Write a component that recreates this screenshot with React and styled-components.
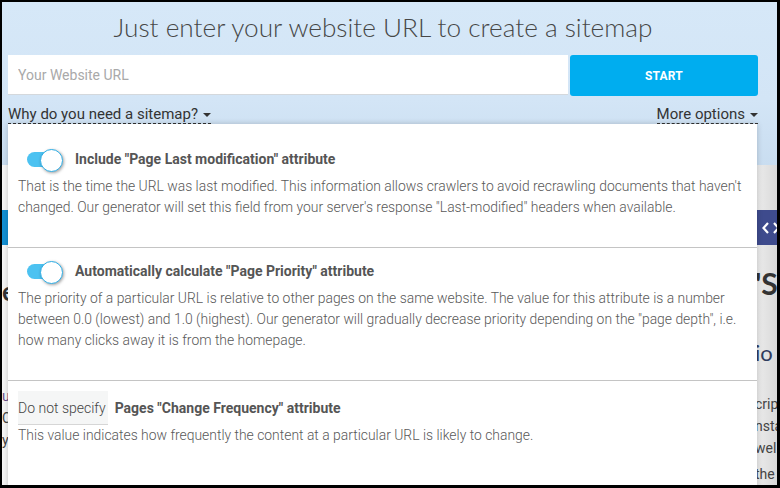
import React from 'react';
import styled, { createGlobalStyle } from 'styled-components';

const GlobalStyle = createGlobalStyle`
  html, body {
    margin: 0;
    padding: 0;
    background: #000;
  }
  * {
    box-sizing: border-box;
  }
`;

const options = [
  {
    kind: 'toggle',
    title: 'Include "Page Last modification" attribute',
    text: 'That is the time the URL was last modified. This information allows crawlers to avoid recrawling documents that haven\'t changed. Our generator will set this field from your server\'s response "Last-modified" headers when available.'
  },
  {
    kind: 'toggle',
    title: 'Automatically calculate "Page Priority" attribute',
    text: 'The priority of a particular URL is relative to other pages on the same website. The value for this attribute is a number between 0.0 (lowest) and 1.0 (highest). Our generator will gradually decrease priority depending on the "page depth", i.e. how many clicks away it is from the homepage.'
  },
  {
    kind: 'select',
    title: 'Pages "Change Frequency" attribute',
    text: 'This value indicates how frequently the content at a particular URL is likely to change.'
  }
];

// fragments of the page that peek out beside the options panel
const sideLines = ['crip', 'nsta', 'wel'];
const sideLines2 = ['the', 'hou'];

const Frame = styled.div`
  width: 780px;
  height: 488px;
  background: #000;
  padding: 2px 3px 3px 2px;
`;

const Window = styled.div`
  position: relative;
  width: 100%;
  height: 100%;
  overflow: hidden;
  display: flex;
  flex-direction: column;
  background: linear-gradient(to right, #f6f6f6 0%, #f6f6f6 96%, #d9d9d9 100%);
`;

const Hero = styled.header`
  flex-shrink: 0;
  height: 163px;
  padding: 0 19px 0 6px;
  display: flex;
  flex-direction: column;
  background: linear-gradient(to bottom, #d6e8f8 0%, #d3e5f6 60%, #c9ddf0 100%);
`;

const Title = styled.h1`
  margin: 10px 0 0;
  height: 30px;
  line-height: 30px;
  text-align: center;
  font-family: 'Lato Light', Lato, 'Open Sans', sans-serif;
  font-weight: 300;
  font-size: 26.2px;
  color: #474747;
`;

const Form = styled.div`
  margin-top: 13px;
  display: flex;
  align-items: flex-start;
  gap: 2px;
`;

const UrlInput = styled.input`
  flex: 1;
  height: 40px;
  border: none;
  border-bottom: 1px solid #d4d8dc;
  background: #fff;
  padding: 0 10px;
  font-family: Roboto, 'Liberation Sans', sans-serif;
  font-size: 14px;
  color: #333;
  outline: none;

  &::placeholder {
    color: #a9a9a9;
  }
`;

const StartButton = styled.button`
  width: 188px;
  height: 41px;
  border: none;
  border-radius: 3px;
  background: #00adef;
  color: #fff;
  font-family: Roboto, 'Liberation Sans', sans-serif;
  font-weight: 700;
  font-size: 12px;
  letter-spacing: 0.2px;
  cursor: pointer;
`;

const Links = styled.div`
  margin-top: 8px;
  display: flex;
  justify-content: space-between;
  align-items: center;
  height: 20px;
`;

const DropLink = styled.span`
  display: inline-flex;
  align-items: center;
  gap: 5px;
  font-family: Roboto, 'Liberation Sans', sans-serif;
  font-size: 15px;
  color: #333;
  line-height: 18px;
  border-bottom: 1px dashed #333;
  cursor: pointer;
`;

const Caret = styled.span`
  width: 0;
  height: 0;
  border-left: 4px solid transparent;
  border-right: 4px solid transparent;
  border-top: 4px solid #333;
  margin-top: 2px;
`;

const Body = styled.main`
  flex: 1;
  padding-top: 45px;
  display: flex;
  flex-direction: column;
`;

const Nav = styled.nav`
  height: 35px;
  display: flex;
`;

const NavMain = styled.div`
  flex: 1;
  background: #138fd3;
`;

const NavSide = styled.div`
  width: 300px;
  background: #3e4b8d;
  display: flex;
  align-items: center;
  justify-content: flex-end;
`;

const CodeIcon = styled.svg`
  width: 18px;
  height: 14px;
  margin-right: -3px;
`;

const Columns = styled.div`
  display: flex;
  justify-content: space-between;
`;

const LeftCol = styled.div`
  width: 8px;
  padding-top: 28px;
  overflow: hidden;
`;

const RightCol = styled.div`
  width: 22px;
  padding-top: 20px;
  white-space: nowrap;
  overflow: hidden;
`;

const PageHeading = styled.div`
  font-family: Lato, sans-serif;
  font-size: ${p => p.$size || 30}px;
  line-height: 36px;
  font-weight: 700;
  color: #333;
`;

const PageSub = styled.div`
  margin-top: 38px;
  font-family: Lato, sans-serif;
  font-size: 22px;
  line-height: 28px;
  color: #2f3c5e;
`;

const PageText = styled.div`
  margin-top: ${p => p.$gap || 0}px;
  font-family: Roboto, sans-serif;
  font-size: 14px;
  line-height: 22px;
  color: ${p => p.$color || '#444'};
`;

const Panel = styled.section`
  position: absolute;
  top: 122px;
  left: 6px;
  width: 749px;
  bottom: -20px;
  padding-top: 12px;
  background: #fff;
  box-shadow: 0 0 6px rgba(0, 0, 0, 0.2);
`;

const Option = styled.div`
  padding: ${p => p.$top}px 8px 29px 10px;
  border-bottom: 1px solid #c4c4c4;

  &:last-child {
    border-bottom: none;
  }
`;

const OptionHead = styled.div`
  display: flex;
  align-items: center;
  height: ${p => p.$height}px;
`;

const Toggle = styled.span`
  position: relative;
  width: 36px;
  height: 21px;
  margin: 0 12px 0 9px;
  flex-shrink: 0;

  &::before {
    content: '';
    position: absolute;
    left: 0;
    top: 3px;
    width: 32px;
    height: 15px;
    border-radius: 8px;
    background: #4cc2f1;
  }

  &::after {
    content: '';
    position: absolute;
    right: 0;
    top: 0;
    width: 21px;
    height: 21px;
    border-radius: 50%;
    background: #fff;
    border: 1.5px solid #2eaee6;
    box-shadow: 1px 1px 3px rgba(0, 0, 0, 0.35);
  }
`;

const Select = styled.span`
  display: flex;
  align-items: center;
  height: 34px;
  padding: 0 2px 0 0;
  margin-right: 7px;
  background: #f5f6f6;
  border-bottom: 1px solid #d6d6d6;
  font-family: Roboto, 'Liberation Sans', sans-serif;
  font-size: 14px;
  font-weight: 300;
  color: #444;
`;

const OptionTitle = styled.span`
  font-family: Roboto, 'Liberation Sans', sans-serif;
  font-weight: 700;
  font-size: 14px;
  color: #555;
`;

const OptionText = styled.p`
  margin: ${p => p.$gap}px 0 0;
  font-family: Roboto, 'Liberation Sans', sans-serif;
  font-weight: 300;
  font-size: 13.9px;
  line-height: 21px;
  color: #595959;
`;

export default function App() {
  return (
    <>
      <GlobalStyle />
      <Frame>
        <Window>
          <Hero>
            <Title>Just enter your website URL to create a sitemap</Title>
            <Form>
              <UrlInput placeholder="Your Website URL" />
              <StartButton type="button">START</StartButton>
            </Form>
            <Links>
              <DropLink>Why do you need a sitemap? <Caret /></DropLink>
              <DropLink>More options <Caret /></DropLink>
            </Links>
          </Hero>

          <Body>
            <Nav>
              <NavMain />
              <NavSide>
                <CodeIcon viewBox="0 0 18 14" fill="none" stroke="#fff" strokeWidth="2.2">
                  <path d="M6 2 L1.5 7 L6 12" />
                  <path d="M12 2 L16.5 7 L12 12" />
                </CodeIcon>
              </NavSide>
            </Nav>
            <Columns>
              <LeftCol>
                <PageHeading $size={26}>e</PageHeading>
                <PageText $gap={76} $color="#6a4c8a">u</PageText>
                <PageText>C</PageText>
                <PageText>y</PageText>
              </LeftCol>
              <RightCol>
                <PageHeading>'S</PageHeading>
                <PageSub>io</PageSub>
                {sideLines.map((l, i) => (
                  <PageText key={l} $gap={i === 0 ? 26 : 0}>{l}</PageText>
                ))}
                {sideLines2.map((l, i) => (
                  <PageText key={l} $gap={i === 0 ? 4 : 0}>{l}</PageText>
                ))}
              </RightCol>
            </Columns>
          </Body>

          <Panel>
            {options.map(o => (
              <Option key={o.title} $top={o.kind === 'select' ? 10 : 14}>
                <OptionHead $height={o.kind === 'select' ? 34 : 18}>
                  {o.kind === 'toggle' ? <Toggle /> : <Select>Do not specify</Select>}
                  <OptionTitle>{o.title}</OptionTitle>
                </OptionHead>
                <OptionText $gap={o.kind === 'select' ? 0 : 8}>{o.text}</OptionText>
              </Option>
            ))}
          </Panel>
        </Window>
      </Frame>
    </>
  );
}
